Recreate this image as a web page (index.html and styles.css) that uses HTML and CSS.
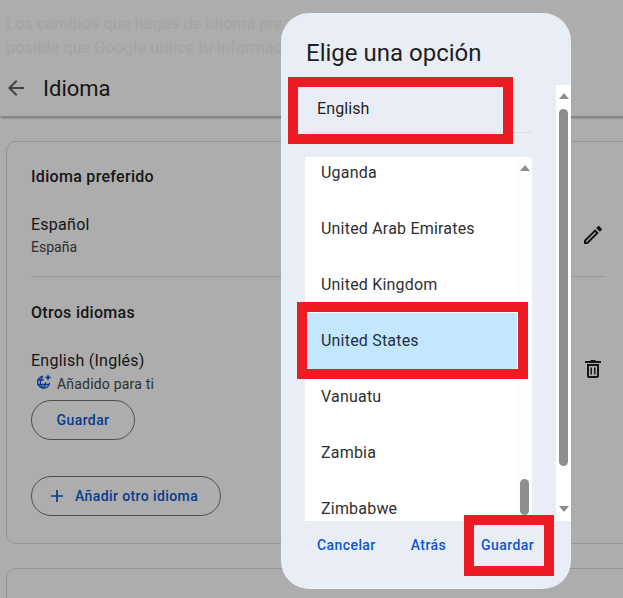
FILE: index.html
```html
<!DOCTYPE html>
<html lang="es">
<head>
  <meta charset="UTF-8" />
  <meta name="viewport" content="width=device-width, initial-scale=1" />
  <title>Idioma</title>
  <link rel="stylesheet" href="styles.css">
</head>
<body>

<div class="page">
  <p class="intro">Los cambios que hagas de idioma preferido se<br>posible que Google utilice tu información para</p>

  <header class="topbar">
    <svg class="icon-back" viewBox="0 0 24 24"><path d="M20 11H7.83l5.59-5.59L12 4l-8 8 8 8 1.41-1.41L7.83 13H20v-2z"/></svg>
    <h1>Idioma</h1>
  </header>

  <section class="card">
    <h2>Idioma preferido</h2>
    <div class="lang-row">
      <div>
        <div class="lang-name">Español</div>
        <div class="lang-sub">España</div>
      </div>
      <svg class="icon-action icon-edit" viewBox="0 0 24 24"><path d="M3 17.25V21h3.75L17.81 9.94l-3.75-3.75L3 17.25zM5.92 19H5v-.92l9.06-9.06.92.92L5.92 19zM20.71 7.04c.39-.39.39-1.02 0-1.41l-2.34-2.34c-.2-.2-.45-.29-.71-.29s-.51.09-.7.28l-1.83 1.83 3.75 3.75 1.83-1.82z"/></svg>
    </div>
    <hr class="divider">
    <h2>Otros idiomas</h2>
    <div class="lang-row lang-row-other">
      <div>
        <div class="lang-name">English (Inglés)</div>
        <div class="lang-added">
          <svg class="icon-globe" viewBox="0 0 16 16" fill="none"><path d="M7 2.2a6 6 0 1 0 6.6 6.6M1.2 6h6.6M1.2 10.500h12M7 2.200C5.200 4 4.300 6 4.300 8.300s.9 4.200 2.700 6c1.800-1.800 2.700-3.700 2.700-6"/><path class="spark" d="M12 0l1 2.500 2.500 1-2.500 1-1 2.500-1-2.500-2.500-1 2.500-1z"/></svg>
          <span>Añadido para ti</span>
        </div>
      </div>
      <svg class="icon-action icon-trash" viewBox="0 0 24 24"><path fill-rule="evenodd" d="M4 4h5l1-1h4l1 1h5v2H4zM6 7h12v12c0 1.100-.9 2-2 2H8c-1.100 0-2-.9-2-2V7zm2 2v10h8V9H8z"/><path d="M9.500 10.500h1.500v7H9.500zM13 10.500h1.500v7H13z"/></svg>
    </div>
    <button class="btn-outline btn-save">Guardar</button>
    <button class="btn-outline btn-add">
      <svg class="icon-plus" viewBox="0 0 14 14"><path d="M6 0h2v6h6v2H8v6H6V8H0V6h6z"/></svg>
      Añadir otro idioma
    </button>
  </section>

  <section class="card card-next">
    <h2>Añadir idiomas a tus servicios</h2>
  </section>
</div>

<div class="scrim"></div>

<div class="dialog">
  <h3>Elige una opción</h3>
  <div class="dialog-body">
    <div class="dialog-scroll">
      <div class="selected-lang">English</div>
      <div class="region-box">
        <ul class="region-list">
          <li>Uganda</li>
          <li>United Arab Emirates</li>
          <li>United Kingdom</li>
          <li class="current">United States</li>
          <li>Vanuatu</li>
          <li>Zambia</li>
          <li>Zimbabwe</li>
        </ul>
        <div class="scrollbar scrollbar-inner">
          <span class="arrow-up"></span>
          <span class="thumb"></span>
        </div>
      </div>
    </div>
    <div class="scrollbar scrollbar-outer">
      <span class="arrow-up"></span>
      <span class="thumb"></span>
      <span class="arrow-down"></span>
    </div>
  </div>
  <div class="dialog-actions">
    <a>Cancelar</a>
    <a>Atrás</a>
    <a>Guardar</a>
  </div>
</div>

<!-- recuadros rojos de la captura -->
<div class="mark mark-lang"></div>
<div class="mark mark-region"></div>
<div class="mark mark-save"></div>

</body>
</html>
```

FILE: styles.css
```css
html, body { height: 100%; }
body {
  margin: 0;
  background: #fff;
  color: #1f1f1f;
  font-family: Roboto, "Noto Sans", sans-serif;
  overflow: hidden;
  position: relative;
}
.page { width: 640px; }
.intro {
  margin: 0;
  padding: 12px 0 0 6px;
  width: 275px;
  height: 58px;
  overflow: hidden;
  font-size: 16px;
  line-height: 24px;
  letter-spacing: 0.2px;
  color: #f3f3f3;
  white-space: nowrap;
}
.topbar {
  display: flex;
  align-items: center;
  gap: 15px;
  height: 36px;
  padding: 0 0 10px 4px;
  border-bottom: 1px solid #c8c8c8;
  box-shadow: 0 2px 2px -1px rgb(0 0 0 / 0.35);
}
.icon-back { width: 24px; height: 24px; fill: #5f6368; }
h1 { margin: 0; font-size: 22px; font-weight: 400; }

.card {
  margin: 24px 0 0 6px;
  width: 640px;
  box-sizing: border-box;
  padding: 24px 0 0 24px;
  height: 403px;
  border: 1px solid #dadce0;
  border-radius: 10px;
}
.card-next { margin-top: 24px; padding-top: 26px; height: 100px; }
h2 { margin: 0; font-size: 16px; line-height: 22px; font-weight: 480; letter-spacing: 0.3px; }
.lang-row {
  display: flex;
  justify-content: space-between;
  align-items: center;
  width: 574px;
  margin-top: 26px;
}
.lang-name { font-size: 16px; line-height: 22px; letter-spacing: 0.25px; }
.lang-sub { font-size: 14px; line-height: 22px; color: #444746; }
.icon-action { width: 24px; height: 24px; fill: #1f1f1f; }
.icon-edit { margin-bottom: 3px; }
.icon-trash { margin-bottom: 8px; }
.divider {
  width: 574px;
  margin: 18px 0 25px;
  border: 0;
  border-top: 1px solid #dadce0;
}
.lang-added {
  display: flex;
  align-items: center;
  gap: 5px;
  padding-left: 5px;
  font-size: 14px;
  line-height: 24px;
  letter-spacing: 0.2px;
  color: #444746;
}
.icon-globe { width: 16px; height: 16px; margin-top: -4px; stroke: #0b57d0; stroke-width: 1.300; }
.spark { fill: #0b57d0; stroke: none; }

.btn-outline {
  display: flex;
  align-items: center;
  justify-content: center;
  height: 40px;
  padding: 0;
  background: none;
  border: 1px solid #747775;
  border-radius: 20px;
  color: #0b57d0;
  font: 480 14px Roboto, "Noto Sans", sans-serif;
  letter-spacing: 0.4px;
}
.btn-save { width: 104px; margin-top: 4px; }
.btn-add { width: 190px; margin-top: 36px; gap: 12px; justify-content: flex-start; padding-left: 19px; }
.icon-plus { width: 12px; height: 12px; fill: #0b57d0; }

.scrim {
  position: absolute;
  inset: 0;
  background: rgb(0 0 0 / 0.32);
}

.dialog {
  position: absolute;
  left: 281px;
  top: 13px;
  width: 290px;
  height: 576px;
  display: flex;
  flex-direction: column;
  background: #e9edf6;
  border-radius: 28px;
  overflow: hidden;
}
h3 {
  margin: 0;
  padding: 26px 0 0 25px;
  height: 46px;
  font-size: 24px;
  line-height: 28px;
  font-weight: 400;
}
.dialog-body {
  display: flex;
  height: 436px;
}
.dialog-scroll { width: 275px; overflow: hidden; }
.selected-lang {
  margin: 2px 24px 0 25px;
  padding: 1px 0 0 11px;
  height: 46px;
  line-height: 42px;
  font-size: 16px;
  letter-spacing: 0.1px;
  box-sizing: border-box;
  border-bottom: 1px solid #dde0e6;
}
.region-box {
  display: flex;
  margin: 24px 24px 0 24px;
  height: 364px;
  background: #fff;
  overflow: hidden;
}
.region-list {
  flex: 1;
  list-style: none;
  margin: -12px 0 0;
  padding: 0;
}
.region-list li {
  height: 56px;
  line-height: 56px;
  padding-left: 16px;
  font-size: 16px;
  letter-spacing: 0.2px;
  color: #303030;
  white-space: nowrap;
}
.region-list .current { background: #c2e7ff; color: #1f2f3f; }

.scrollbar {
  display: flex;
  flex-direction: column;
  align-items: center;
  width: 15px;
  background: #fdfdfd;
}
.scrollbar-outer { background: #fff; }
.thumb { display: block; width: 9px; background: #8e8e8e; border-radius: 5px; }
.scrollbar-outer .thumb { height: 357px; margin-top: 10px; }
.scrollbar-inner .thumb { height: 36px; margin-top: 308px; }
.arrow-up, .arrow-down {
  display: block;
  width: 0;
  height: 0;
  border-left: 5px solid transparent;
  border-right: 5px solid transparent;
}
.arrow-up { margin-top: 8px; border-bottom: 6px solid #8e8e8e; }
.arrow-down { margin-top: 40px; border-top: 6px solid #8e8e8e; }

.dialog-actions {
  display: flex;
  align-items: center;
  height: 48px;
  padding-left: 36px;
  gap: 35px;
  font-size: 14px;
  font-weight: 480;
  letter-spacing: 0.42px;
  color: #0b57d0;
}

.mark {
  position: absolute;
  box-sizing: border-box;
  border: 10px solid #ed1c24;
}
.mark-lang { left: 288px; top: 77px; width: 225px; height: 67px; }
.mark-region { left: 297px; top: 302px; width: 231px; height: 77px; }
.mark-save { left: 464px; top: 515px; width: 90px; height: 61px; }
```
